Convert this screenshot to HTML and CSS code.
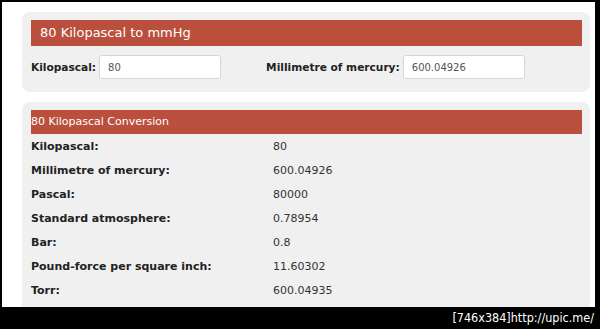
FILE: index.html
```html
<!DOCTYPE html>
<html lang="en">
<head>
  <meta charset="UTF-8" />
  <meta name="viewport" content="width=device-width, initial-scale=1.0"/>
  <title>80 Kilopascal to mmHg</title>
  <link rel="stylesheet" href="styles.css">
</head>
<body>
  <div class="screen">
    <div class="panel converter">
      <h1 class="panel-title">80 Kilopascal to mmHg</h1>
      <div class="form-row">
        <label class="field">
          <span class="field-label">Kilopascal:</span>
          <input type="text" value="80">
        </label>
        <label class="field">
          <span class="field-label">Millimetre of mercury:</span>
          <input type="text" value="600.04926">
        </label>
      </div>
    </div>

    <div class="panel conversion">
      <h2 class="panel-subtitle">80 Kilopascal Conversion</h2>
      <div class="result-grid">
        <div class="result-label">Kilopascal:</div><div class="result-value">80</div>
        <div class="result-label">Millimetre of mercury:</div><div class="result-value">600.04926</div>
        <div class="result-label">Pascal:</div><div class="result-value">80000</div>
        <div class="result-label">Standard atmosphere:</div><div class="result-value">0.78954</div>
        <div class="result-label">Bar:</div><div class="result-value">0.8</div>
        <div class="result-label">Pound-force per square inch:</div><div class="result-value">11.60302</div>
        <div class="result-label">Torr:</div><div class="result-value">600.04935</div>
      </div>
    </div>
  </div>
  <div class="watermark">[746x384]http://upic.me/</div>
</body>
</html>
```

FILE: styles.css
```css
body {
  margin: 0;
  background: #000;
  font-family: "DejaVu Sans", Verdana, sans-serif;
  color: #222;
  height: 329px;
  overflow: hidden;
}
.screen {
  background: #fff;
  margin: 2px 5px 0 2px;
  height: 305px;
  padding: 10px 0 0 20px;
  box-sizing: border-box;
  overflow: hidden;
}
.panel {
  background: #f0f0f0;
  border-radius: 8px;
  width: 568px;
  box-sizing: border-box;
  padding: 8px 8px 0 9px;
}
.converter {
  height: 80px;
}
.conversion {
  margin-top: 10px;
  height: 210px;
  border-radius: 8px 8px 6px 6px;
}
.panel-title {
  margin: 0;
  background: #b94f3c;
  color: #fff;
  font-size: 13px;
  font-weight: normal;
  height: 26px;
  line-height: 26px;
  padding-left: 9px;
}
.form-row {
  display: flex;
  gap: 45px;
  margin-top: 9px;
}
.field {
  display: flex;
  align-items: center;
  gap: 3px;
}
.field-label {
  font-size: 10.6px;
  font-weight: bold;
}
.field input {
  width: 122px;
  height: 24px;
  box-sizing: border-box;
  border: 1px solid #d6d6d6;
  border-radius: 3px;
  background: #fff;
  font-family: "DejaVu Sans", Verdana, sans-serif;
  font-size: 10px;
  color: #555;
  padding: 0 8px;
  margin: 0;
}
.panel-subtitle {
  margin: 0;
  background: #b94f3c;
  color: #fff;
  font-size: 11px;
  font-weight: normal;
  height: 24px;
  line-height: 24px;
  padding-left: 0;
}
.result-grid {
  display: grid;
  grid-template-columns: 242px auto;
  grid-auto-rows: 24px;
  align-items: center;
  font-size: 11px;
}
.result-label {
  font-weight: bold;
}
.result-value {
  color: #333;
}
.watermark {
  text-align: right;
  color: #fff;
  font-family: "DejaVu Sans Condensed", sans-serif;
  font-size: 12.5px;
  padding: 3px 6px 0 0;
}
```
